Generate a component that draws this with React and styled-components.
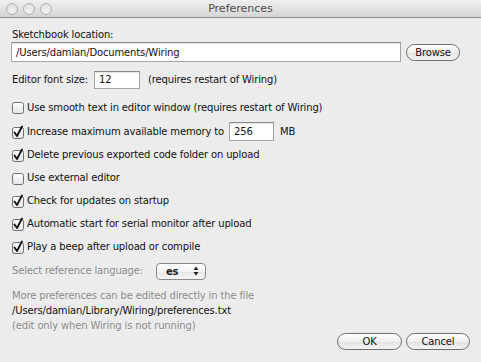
import React from 'react';
import styled, { createGlobalStyle } from 'styled-components';

const GlobalStyle = createGlobalStyle`
    html, body {
        margin: 0;
        padding: 0;
        background: #ececec;
    }
`;

const Window = styled.div`
    width: 481px;
    height: 362px;
    display: flex;
    flex-direction: column;
    background: #ececec;
    font-family: 'DejaVu Sans', 'Liberation Sans', sans-serif;
    font-size: 10px;
    letter-spacing: -0.15px;
    color: #111;
    overflow: hidden;
`;

const TitleBar = styled.div`
    height: 17px;
    display: flex;
    align-items: center;
    position: relative;
    background: linear-gradient(#f0f0f0, #e2e2e2 50%, #d6d6d6);
    border-bottom: 1px solid #8f8f8f;
    box-sizing: content-box;
`;

const Lights = styled.div`
    display: flex;
    gap: 5px;
    padding-left: 6px;
`;

const Light = styled.span`
    width: 10px;
    height: 10px;
    border-radius: 50%;
    border: 1px solid #b3b3b3;
    background: radial-gradient(circle at 50% 70%, #f2f2f2, #dcdcdc);
`;

const Title = styled.div`
    position: absolute;
    left: 0;
    right: 0;
    text-align: center;
    font-size: 11px;
    letter-spacing: 0;
    color: #4e4e4e;
    pointer-events: none;
`;

const Body = styled.div`
    flex: 1;
    display: flex;
    flex-direction: column;
    padding: 10px 11px 0 11px;
`;

const Label = styled.div`
    height: 14px;
    line-height: 14px;
    padding-left: ${p => (p.$flush ? 0 : 1)}px;
    color: ${p => (p.$muted ? '#8d8d8d' : '#111')};
`;

const Row = styled.div`
    display: flex;
    align-items: center;
    height: ${p => p.$h || 22}px;
    margin-top: ${p => p.$top || 0}px;
    padding-left: ${p => p.$indent || 0}px;
`;

const Field = styled.div`
    box-sizing: border-box;
    width: ${p => (p.$w ? `${p.$w}px` : 'auto')};
    flex: ${p => (p.$w ? '0 0 auto' : '1')};
    height: ${p => p.$h || 18}px;
    background: #fff;
    border: 1px solid #a4a4a4;
    border-top-color: #8a8a8a;
    box-shadow: inset 0 1px 1px rgba(0, 0, 0, 0.12);
    display: flex;
    align-items: center;
    padding-left: 4px;
    margin: 0 ${p => p.$mr || 0}px 0 ${p => p.$ml || 0}px;
`;

const PillButton = styled.div`
    box-sizing: border-box;
    width: ${p => p.$w}px;
    height: 17px;
    border-radius: 9px;
    border: 1px solid #6f6f6f;
    background: linear-gradient(#ffffff, #f0f0f0 50%, #e2e2e2 51%, #f4f4f4);
    display: flex;
    align-items: center;
    justify-content: center;
    color: #111;
    margin-left: ${p => p.$ml || 0}px;
`;

const Hint = styled.span`
    margin-left: ${p => p.$ml || 0}px;
`;

const BoxWrap = styled.span`
    width: 13px;
    height: 14px;
    margin-right: 2px;
    margin-left: 1px;
    display: flex;
    align-items: center;
`;

const Select = styled.div`
    box-sizing: border-box;
    width: 50px;
    height: 17px;
    margin-left: 13px;
    border: 1px solid #8a8a8a;
    border-radius: 4px;
    background: linear-gradient(#ffffff, #f3f3f3 50%, #e6e6e6 51%, #f6f6f6);
    display: flex;
    align-items: center;
    justify-content: space-between;
    padding: 0 6px 0 9px;
    font-weight: bold;
    color: #222;
`;

const Info = styled.div`
    margin-top: 6px;
    display: flex;
    flex-direction: column;
    line-height: 15px;
    padding-left: 1px;
`;

const InfoLine = styled.div`
    color: ${p => (p.$muted ? '#8d8d8d' : '#111')};
`;

const Buttons = styled.div`
    display: flex;
    justify-content: flex-end;
    margin-top: 0;
`;

const Check = ({ checked }) => (
    <BoxWrap>
        <svg width="13" height="14" viewBox="0 0 13 14">
            <defs>
                <linearGradient id="cbg" x1="0" y1="0" x2="0" y2="1">
                    <stop offset="0" stopColor="#ffffff" />
                    <stop offset="1" stopColor="#e4e4e4" />
                </linearGradient>
            </defs>
            <rect x="0.5" y="2.5" width="11" height="11" rx="2" fill="url(#cbg)" stroke="#707070" />
            {checked && (
                <path d="M2.5 7.5 L5 11 L10 1.5" fill="none" stroke="#111" strokeWidth="1.8" strokeLinecap="round" strokeLinejoin="round" />
            )}
        </svg>
    </BoxWrap>
);

const Stepper = () => (
    <svg width="6" height="10" viewBox="0 0 6 10">
        <path d="M3 0.5 L5.5 4 H0.5 Z" fill="#222" />
        <path d="M3 9.5 L5.5 6 H0.5 Z" fill="#222" />
    </svg>
);

const options = [
    ['Delete previous exported code folder on upload', true],
    ['Use external editor', false],
    ['Check for updates on startup', true],
    ['Automatic start for serial monitor after upload', true],
    ['Play a beep after upload or compile', true],
];

const App = () => (
    <Window>
        <GlobalStyle />
        <TitleBar>
            <Lights>
                <Light />
                <Light />
                <Light />
            </Lights>
            <Title>Preferences</Title>
        </TitleBar>
        <Body>
            <Label>Sketchbook location:</Label>
            <Row $h={20}>
                <Field $h={20}>/Users/damian/Documents/Wiring</Field>
                <PillButton $w={54} $ml={5}>Browse</PillButton>
                <span style={{ width: 10 }} />
            </Row>
            <Row $h={19} $top={8} $indent={1}>
                Editor font size:
                <Field $w={46} $h={18} $ml={6}>12</Field>
                <Hint $ml={8}>(requires restart of Wiring)</Hint>
            </Row>
            <Row $top={7}>
                <Check />
                Use smooth text in editor window (requires restart of Wiring)
            </Row>
            <Row $h={23} $top={2}>
                <Check checked />
                Increase maximum available memory to
                <Field $w={45} $h={19} $ml={5}>256</Field>
                <Hint $ml={6}>MB</Hint>
            </Row>
            {options.map(([text, on]) => (
                <Row key={text} $h={23}>
                    <Check checked={on} />
                    {text}
                </Row>
            ))}
            <Row $top={2} $indent={1}>
                <Label $muted $flush>Select reference language:</Label>
                <Select>
                    es
                    <Stepper />
                </Select>
            </Row>
            <Info>
                <InfoLine $muted>More preferences can be edited directly in the file</InfoLine>
                <InfoLine>/Users/damian/Library/Wiring/preferences.txt</InfoLine>
                <InfoLine $muted>(edit only when Wiring is not running)</InfoLine>
            </Info>
            <Buttons>
                <PillButton $w={65}>OK</PillButton>
                <PillButton $w={64} $ml={4}>Cancel</PillButton>
            </Buttons>
        </Body>
    </Window>
);

export default App;
